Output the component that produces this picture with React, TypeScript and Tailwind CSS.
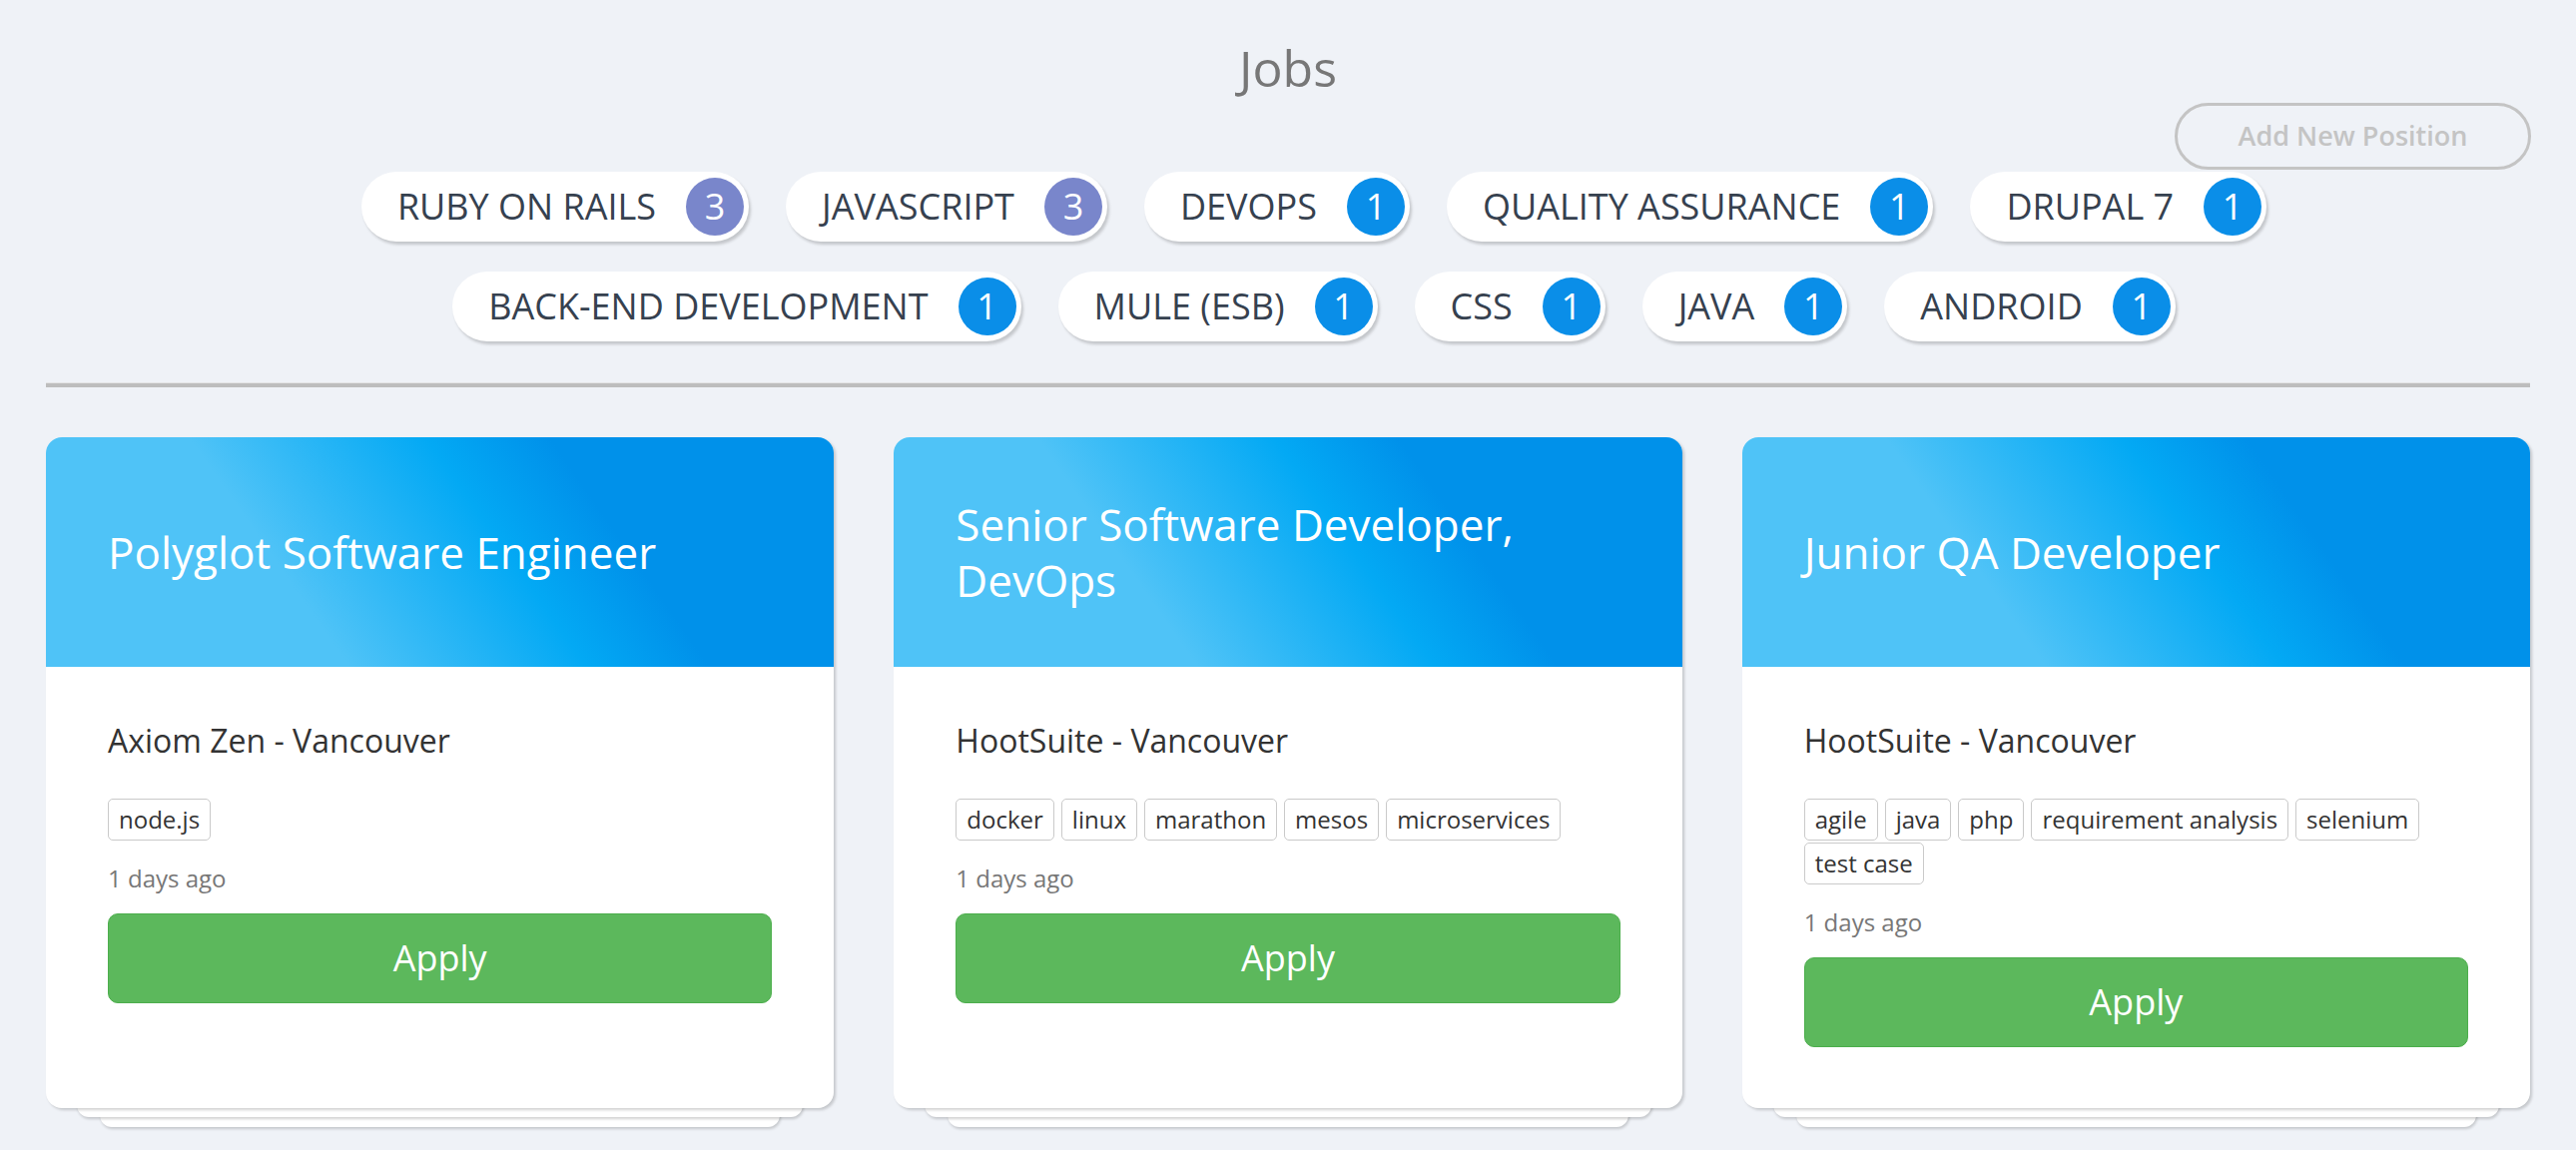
import React from 'react';

interface Skill {
  name: string;
  count: number;
}

interface Job {
  title: string;
  company: string;
  tags: string[];
  posted: string;
}

const skills: Skill[] = [
  { name: 'RUBY ON RAILS', count: 3 },
  { name: 'JAVASCRIPT', count: 3 },
  { name: 'DEVOPS', count: 1 },
  { name: 'QUALITY ASSURANCE', count: 1 },
  { name: 'DRUPAL 7', count: 1 },
  { name: 'BACK-END DEVELOPMENT', count: 1 },
  { name: 'MULE (ESB)', count: 1 },
  { name: 'CSS', count: 1 },
  { name: 'JAVA', count: 1 },
  { name: 'ANDROID', count: 1 },
];

const jobs: Job[] = [
  {
    title: 'Polyglot Software Engineer',
    company: 'Axiom Zen - Vancouver',
    tags: ['node.js'],
    posted: '1 days ago',
  },
  {
    title: 'Senior Software Developer, DevOps',
    company: 'HootSuite - Vancouver',
    tags: ['docker', 'linux', 'marathon', 'mesos', 'microservices'],
    posted: '1 days ago',
  },
  {
    title: 'Junior QA Developer',
    company: 'HootSuite - Vancouver',
    tags: ['agile', 'java', 'php', 'requirement analysis', 'selenium', 'test case'],
    posted: '1 days ago',
  },
];

const SkillPill: React.FC<{ skill: Skill }> = ({ skill }) => (
  <div className="h-[70px] flex items-center gap-[30px] pl-[36px] pr-[5px] bg-white rounded-full shadow-[2px_3px_3px_rgba(0,0,0,0.18)]">
    <span className="text-[36px] leading-none text-[#36414f]">{skill.name}</span>
    <span
      className={`w-[58px] h-[58px] rounded-full flex items-center justify-center text-[36px] leading-none text-white ${
        skill.count > 1 ? 'bg-[#7986cb]' : 'bg-[#0a8ee8]'
      }`}
    >
      {skill.count}
    </span>
  </div>
);

const JobCard: React.FC<{ job: Job }> = ({ job }) => (
  <div className="relative">
    {/* stacked sheets peeking out under the card */}
    <div className="absolute left-[54px] right-[54px] bottom-[-19px] h-[60px] bg-white rounded-[12px] shadow-[1px_2px_3px_rgba(0,0,0,0.18)]" />
    <div className="absolute left-[31px] right-[31px] bottom-[-9px] h-[60px] bg-white rounded-[12px] shadow-[1px_2px_3px_rgba(0,0,0,0.18)]" />
    <div className="relative h-full bg-white rounded-[16px] overflow-hidden shadow-[2px_2px_3px_rgba(0,0,0,0.18)]">
      <div className="h-[230px] flex items-center px-[62px] bg-[linear-gradient(55deg,#4fc3f7_32%,#03a9f4_57%,#0091ea_70%)]">
        <h2 className="text-[44px] leading-[56px] text-white">{job.title}</h2>
      </div>
      <div className="px-[62px] pt-[50px] pb-[61px]">
        <div className="text-[32px] leading-[48px] text-[#333]">{job.company}</div>
        <div className="mt-[34px] flex flex-wrap gap-x-[7px] gap-y-[2px]">
          {job.tags.map((tag) => (
            <span
              key={tag}
              className="h-[42px] px-[10px] flex items-center border-[1.5px] border-[#cacaca] rounded-[5px] text-[24px] text-[#333]"
            >
              {tag}
            </span>
          ))}
        </div>
        <div className="mt-[20px] text-[24px] leading-[36px] text-[#777]">{job.posted}</div>
        <button className="mt-[17px] w-full h-[90px] rounded-[10px] bg-[#5cb85c] border border-[#4cae4c] text-white text-[36px]">
          Apply
        </button>
      </div>
    </div>
  </div>
);

export default function App() {
  return (
    <div className="min-h-screen bg-[#eff2f7] font-['Open_Sans',sans-serif] pb-[40px]">
      <h1 className="pt-[41px] text-center text-[50px] leading-[55px] text-[#777]">Jobs</h1>

      <div className="mt-[7px] flex justify-end pr-[45px]">
        <button className="w-[357px] h-[67px] rounded-full border-[3px] border-[#c4c4c4] text-[#c4c4c4] text-[27px] font-semibold">
          Add New Position
        </button>
      </div>

      <div className="mt-[2px] pl-[52px] flex justify-center">
        <div className="w-[2000px] flex flex-wrap justify-center gap-x-[37px] gap-y-[30px]">
          {skills.map((s) => (
            <SkillPill key={s.name} skill={s} />
          ))}
        </div>
      </div>

      <div className="mx-[46px] mt-[41px] border-t border-[#e4e4e4] h-[5px] bg-[#bdbdbd]" />

      <div className="mt-[50px] px-[46px] grid grid-cols-3 gap-[60px]">
        {jobs.map((job) => (
          <JobCard key={job.title} job={job} />
        ))}
      </div>
    </div>
  );
}
